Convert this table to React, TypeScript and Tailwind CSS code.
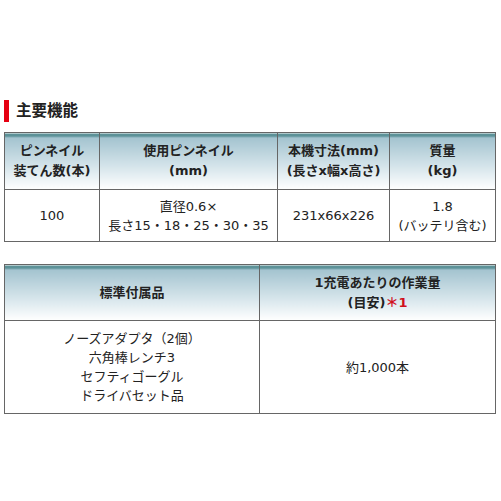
const font = "font-['DejaVu_Sans','Noto_Sans_CJK_JP',sans-serif]";
const head =
  "border border-[#666] bg-[linear-gradient(to_bottom,#5d9298_0px,#5d9298_3px,#a3c3cf_4px,#d6e5eb_60%,#ffffff_100%)] text-[13px] font-bold leading-[20px] text-[#222] align-middle text-center";
const cell = "border border-[#666] text-[13px] leading-[19px] text-[#222] align-middle text-center";

export default function App() {
  return (
    <div className={`h-[501px] w-[501px] bg-white ${font}`}>
      <div className="flex items-center gap-[7px] pl-[4px] pt-[100px]">
        <span className="h-[22px] w-[5px] bg-[#e60012]" />
        <h2 className="text-[15.5px] font-bold leading-[22px] text-[#222]">主要機能</h2>
      </div>

      <table className="ml-[4px] mt-[10px] w-[491px] table-fixed border-collapse">
        <colgroup>
          <col className="w-[95px]" />
          <col className="w-[178px]" />
          <col className="w-[112px]" />
          <col className="w-[106px]" />
        </colgroup>
        <thead>
          <tr className="h-[57px]">
            <th className={head}>
              ピンネイル
              <br />
              装てん数(本)
            </th>
            <th className={head}>
              使用ピンネイル
              <br />
              (mm)
            </th>
            <th className={head}>
              本機寸法(mm)
              <br />
              (長さx幅x高さ)
            </th>
            <th className={head}>
              質量
              <br />
              (kg)
            </th>
          </tr>
        </thead>
        <tbody>
          <tr className="h-[52px]">
            <td className={cell}>100</td>
            <td className={cell}>
              直径0.6×
              <br />
              長さ15・18・25・30・35
            </td>
            <td className={cell}>231x66x226</td>
            <td className={cell}>
              1.8
              <br />
              (バッテリ含む)
            </td>
          </tr>
        </tbody>
      </table>

      <table className="ml-[4px] mt-[22px] w-[491px] table-fixed border-collapse">
        <colgroup>
          <col className="w-[255px]" />
          <col className="w-[236px]" />
        </colgroup>
        <thead>
          <tr className="h-[56px]">
            <th className={head}>標準付属品</th>
            <th className={head}>
              1充電あたりの作業量
              <br />
              (目安)<span className="text-[#d0101c]">＊1</span>
            </th>
          </tr>
        </thead>
        <tbody>
          <tr className="h-[93px]">
            <td className={cell}>
              ノーズアダプタ（2個）
              <br />
              六角棒レンチ3
              <br />
              セフティゴーグル
              <br />
              ドライバセット品
            </td>
            <td className={cell}>約1,000本</td>
          </tr>
        </tbody>
      </table>
    </div>
  );
}
